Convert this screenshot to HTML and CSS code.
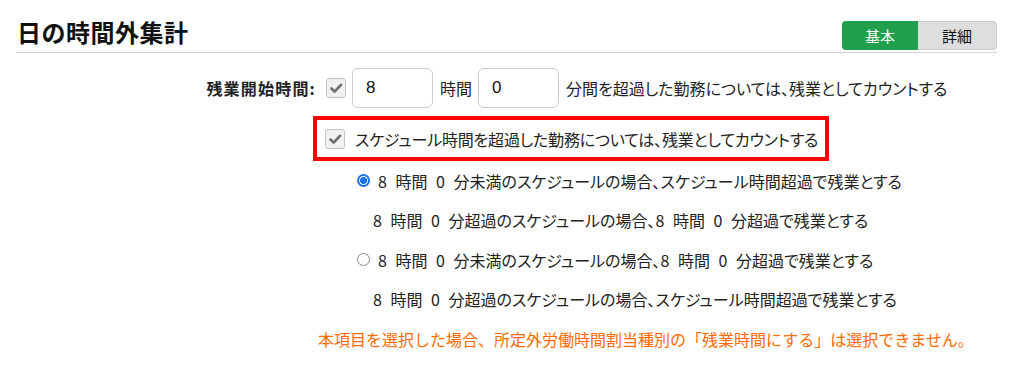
FILE: index.html
```html
<!DOCTYPE html>
<html lang="ja">
<head>
<meta charset="utf-8">
<link rel="stylesheet" href="styles.css">
</head>
<body>
<div class="header">
  <h1 class="title">日の時間外集計</h1>
  <div class="toggle">
    <span class="tab tab-on">基本</span>
    <span class="tab tab-off">詳細</span>
  </div>
</div>
<div class="form">
  <div class="row-start">
    <div class="label">残業開始時間:</div>
    <span class="check"><svg viewBox="0 0 20 20" width="20" height="20"><path d="M5 10.5 L8.5 14 L15.5 6.5" fill="none" stroke="#6e6e6e" stroke-width="3" stroke-linecap="round" stroke-linejoin="round"/></svg></span>
    <span class="input">8</span>
    <span class="unit">時間</span>
    <span class="input">0</span>
    <span class="unit">分間を超過した勤務については、残業としてカウントする</span>
  </div>
  <div class="highlight">
    <span class="check"><svg viewBox="0 0 20 20" width="20" height="20"><path d="M5 10.5 L8.5 14 L15.5 6.5" fill="none" stroke="#6e6e6e" stroke-width="3" stroke-linecap="round" stroke-linejoin="round"/></svg></span>
    <span class="hl-text">スケジュール時間を超過した勤務については、残業としてカウントする</span>
  </div>
  <div class="opt">
    <span class="radio radio-on"></span>
    <span>8 時間 0 分未満のスケジュールの場合、スケジュール時間超過で残業とする</span>
  </div>
  <div class="opt sub">8 時間 0 分超過のスケジュールの場合、8 時間 0 分超過で残業とする</div>
  <div class="opt">
    <span class="radio"></span>
    <span>8 時間 0 分未満のスケジュールの場合、8 時間 0 分超過で残業とする</span>
  </div>
  <div class="opt sub">8 時間 0 分超過のスケジュールの場合、スケジュール時間超過で残業とする</div>
  <div class="note">本項目を選択した場合、所定外労働時間割当種別の「残業時間にする」は選択できません。</div>
</div>
</body>
</html>
```

FILE: styles.css
```css
* { box-sizing: border-box; }
body {
  margin: 0;
  background: #fff;
  color: #222;
  font-family: "Noto Sans CJK JP", "Noto Sans", sans-serif;
  font-size: 16px;
  font-feature-settings: "palt";
}
.header {
  display: flex;
  align-items: flex-end;
  justify-content: space-between;
  height: 53px;
  padding-bottom: 2px;
  margin: 0 12px 0 16px;
  border-bottom: 1px solid #cfcfcf;
}
.title {
  margin: 0 0 2px 1px;
  font-size: 24px;
  line-height: 32px;
  font-weight: 700;
  color: #111;
  letter-spacing: 0.5px;
  font-feature-settings: normal;
}
.toggle {
  display: flex;
  height: 29px;
  border-radius: 4px;
  overflow: hidden;
}
.tab {
  display: flex;
  align-items: center;
  justify-content: center;
  font-size: 15px;
  height: 29px;
}
.tab-on {
  width: 76px;
  background: #20a04c;
  color: #fff;
}
.tab-off {
  width: 79px;
  background: #dedede;
  border: 1px solid #cdcdcd;
  border-left: none;
  border-radius: 0 4px 4px 0;
  color: #111;
}
.form {
  padding-top: 15px;
}
.row-start {
  display: flex;
  align-items: center;
  height: 40px;
}
.label {
  width: 316px;
  text-align: right;
  font-weight: 700;
  font-size: 16px;
  letter-spacing: 1.2px;
  color: #222;
  font-feature-settings: normal;
}
.check {
  display: inline-flex;
  align-items: center;
  justify-content: center;
  width: 20px;
  height: 20px;
  border: 1px solid #c4c4c4;
  border-radius: 3px;
  background: #f1f1f1;
  flex: none;
}
.check svg { width: 18px; height: 18px; }
.row-start .check { margin-left: 10px; }
.input {
  display: flex;
  align-items: center;
  width: 81px;
  height: 40px;
  margin-left: 6px;
  padding-left: 13px;
  border: 1px solid #cbcbcb;
  border-radius: 6px;
  font-family: "Liberation Sans", "Noto Sans", sans-serif;
  font-size: 17px;
  color: #111;
}
.unit {
  margin-left: 7px;
}
.highlight {
  display: flex;
  align-items: center;
  width: 516px;
  height: 45px;
  margin: 8px 0 0 313px;
  padding-left: 8px;
  border: 4px solid #ff0000;
}
.hl-text {
  margin-left: 10px;
  letter-spacing: -0.2px;
}
.opt {
  display: flex;
  align-items: center;
  height: 39.5px;
  padding-left: 357px;
  word-spacing: 5px;
}
.opt.sub {
  padding-left: 373px;
}
.radio {
  width: 13px;
  height: 13px;
  margin-right: 8px;
  border: 1px solid #8a8a8a;
  border-radius: 50%;
  background: #fff;
  flex: none;
}
.radio-on {
  border: 2px solid #1a73e8;
  background: radial-gradient(circle, #1a73e8 0 3.2px, #fff 3.8px);
}
.note {
  display: flex;
  align-items: center;
  height: 40px;
  padding-left: 318px;
  color: #ff6a00;
  font-size: 16px;
  font-feature-settings: normal;
}
```
